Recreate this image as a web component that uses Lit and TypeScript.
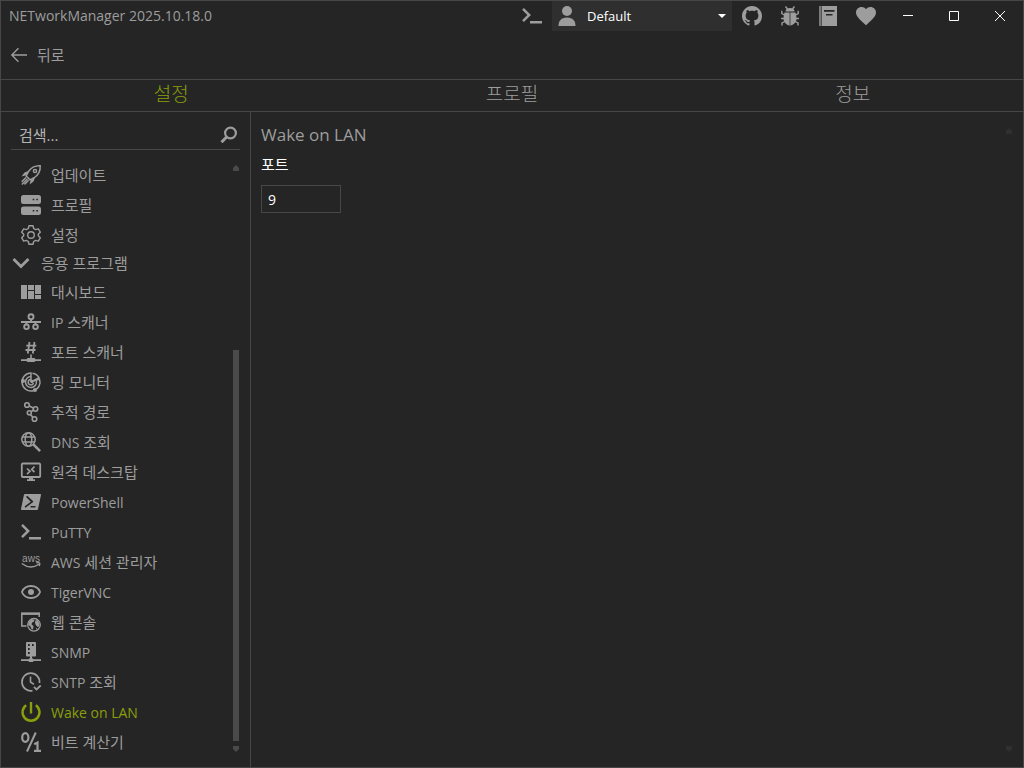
import { LitElement, html, svg, css, nothing } from "lit";
import type { SVGTemplateResult } from "lit";
import { customElement, property, state } from "lit/decorators.js";
import { classMap } from "lit/directives/class-map.js";

const icons: Record<string, SVGTemplateResult> = {
  terminal: svg`<path class="line" stroke-width="2.500" d="M1 2.800 7.200 9 1 15.200M8 16.200H20"/>`,
  person: svg`<circle cx="10" cy="5" r="5"/><path d="M1.500 20c0-5 2.600-8.500 8.500-8.500s8.500 3.500 8.500 8.500z"/>`,
  github: svg`<path transform="scale(1.25)" d="M8 0C3.580 0 0 3.580 0 8c0 3.540 2.290 6.530 5.470 7.590.4.070.55-.17.55-.38 0-.19-.01-.82-.01-1.490-2.010.37-2.530-.49-2.690-.94-.09-.23-.48-.94-.82-1.130-.28-.15-.68-.52-.01-.53.63-.01 1.080.58 1.230.82.72 1.210 1.870.87 2.330.66.070-.52.28-.87.51-1.070-1.780-.2-3.640-.89-3.640-3.950 0-.87.31-1.590.82-2.150-.08-.2-.36-1.020.08-2.120 0 0 .67-.21 2.200.82.64-.18 1.320-.27 2-.27s1.360.09 2 .27c1.530-1.040 2.200-.82 2.200-.82.44 1.100.16 1.920.08 2.120.51.56.82 1.270.82 2.150 0 3.070-1.870 3.750-3.650 3.950.29.25.54.73.54 1.480 0 1.070-.01 1.930-.01 2.200 0 .21.15.46.55.38A8 8 0 0 0 16 8c0-4.420-3.580-8-8-8z"/>`,
  bug: svg`<path d="M5.500 5.500a4.500 3.600 0 0 1 9 0z"/><path d="M4.500 6.500h5v13C6.500 19 3.500 16.500 3.500 12.500c0-2 .4-4 1-6zM15.500 6.500h-5v13c3-.5 6-3 6-7 0-2-.4-4-1-6z"/><path d="M9.300 6.500h1.400v13H9.300z" opacity=".4"/><path class="line" stroke-width="1.400" d="M7.500 3 5.500.5M12.500 3l2-2.500M4.500 9 1.800 7.500V4.800M4 12.500H1M4.800 15.500 2 17v2.500M15.500 9l2.700-1.500V4.800M16 12.500h3M15.200 15.500 18 17v2.500"/>`,
  book: svg`<path d="M1 0h2.200v20H1z" opacity=".7"/><path fill-rule="evenodd" d="M3.700 0H19v20H3.700zM6 4v1.700h10.500V4zM8 8v1.500h6.500V8z"/>`,
  heart: svg`<path d="M10 19.200 8.600 17.900C3.500 13.300 0 10.200 0 6.500 0 3.400 2.400 1 5.500 1 7.300 1 9 1.900 10 3.200 11 1.900 12.700 1 14.500 1 17.600 1 20 3.400 20 6.500c0 3.700-3.500 6.800-8.600 11.400z"/>`,
  search: svg`<circle class="line" cx="12.500" cy="8" r="5.400" stroke-width="2.200"/><path class="line" stroke-width="3" d="m8.800 11.800-5.300 5.500"/>`,
  back: svg`<path class="line" stroke-width="1.700" d="M20 10H1M9.300 1.500 1 10l8.300 8.500"/>`,
  rocket: svg`<path class="line" stroke-width="1.500" d="M19.200.8c-5.500-.3-9 1.700-11.700 5.700L5.200 11l3.800 3.800 4.500-2.300c4-2.700 6-6.200 5.700-11.700z"/><circle class="line" cx="14" cy="6" r="1.600" stroke-width="1.500"/><path d="M7.500 6 3.500 7.500.5 11.500l4.600-1.200zM14 12.500l-1.500 4-4 3 1.200-4.600z"/><path class="line" stroke-width="1.500" d="M5 12.500.7 16.800M6.300 14 .8 19.500M7.600 15.300 3.500 19.400"/>`,
  servers: svg`<path fill-rule="evenodd" d="M2.500 0h15A2.500 2.500 0 0 1 20 2.500v4A2.500 2.500 0 0 1 17.500 9h-15A2.500 2.500 0 0 1 0 6.500v-4A2.500 2.500 0 0 1 2.500 0zM11.700 3.700v1.600h1.600V3.700zm3.600 0v1.600h1.600V3.700zM2.500 11.500h15A2.500 2.500 0 0 1 20 14v3.500a2.500 2.500 0 0 1-2.500 2.500h-15A2.500 2.500 0 0 1 0 17.500V14a2.500 2.500 0 0 1 2.500-2.500zm9.200 3.500v1.600h1.600V15zm3.600 0v1.600h1.600V15z"/>`,
  gear: svg`<path class="line" stroke-width="1.400" stroke-linejoin="round" d="M8 .8h4l.7 2.700 1.900 1.100 2.700-.8 2 3.400-2 2v1.600l2 2-2 3.400-2.700-.8-1.900 1.100-.7 2.700H8l-.7-2.700-1.900-1.100-2.700.8-2-3.400 2-2V9.200l-2-2 2-3.400 2.700.8 1.900-1.100z"/><circle class="line" cx="10" cy="10" r="3.300" stroke-width="1.400"/>`,
  dashboard: svg`<path d="M0 3h6v14H0zM7 3h6v5H7zM7 9h6v8H7zM14 3h6v9h-6zM14 13h6v4h-6z"/>`,
  network: svg`<g class="line" stroke-width="1.900"><circle cx="10" cy="4.700" r="2.500"/><circle cx="5.500" cy="14.800" r="2.300"/><circle cx="14.500" cy="14.800" r="2.300"/><path d="M0 10h20M10 7.300V10M5.500 10v2.400M14.500 10v2.400"/></g>`,
  ports: svg`<path class="line" stroke-width="1.800" d="m8.500 0-1.700 11.500M13.500 0l-1.700 11.500M5.300 3.700h10M4.500 8h10"/><path d="M9.200 12.500h1.600V16h2.700l1 1.200H20V19h-5.500l-1 1h-7l-1-1H0v-1.800h5.500l1-1.200h2.700z"/>`,
  radar: svg`<g class="line" stroke-width="1.500"><path d="M10 10V1a9 9 0 1 0 8.500 6L10 10"/><path d="M11.500 1.200a9 9 0 0 1 6.500 4.500L10 10M10 4.500a5.500 5.500 0 1 0 5.400 4.500M10 7.500a2.700 2.700 0 1 0 2.500 3.500"/></g><circle cx="2" cy="9" r="2"/><circle cx="14" cy="18" r="2"/><circle cx="11" cy="9.500" r="1.700"/>`,
  route: svg`<g class="line" stroke-width="1.600"><circle cx="6" cy="3" r="2.300"/><circle cx="14.500" cy="7" r="2.200"/><circle cx="8.300" cy="10.800" r="2"/><circle cx="13.500" cy="17" r="2.300"/><path d="m8.300 4 4 2M12.500 8l-2.300 1.700M9.300 12.700l2.600 2.500"/></g>`,
  lookup: svg`<g class="line" stroke-width="1.500"><circle cx="7.500" cy="7.500" r="6.700"/><ellipse cx="7.500" cy="7.500" rx="3.300" ry="6.700"/><path d="M1.500 5h12M1.500 10h12"/></g><path class="line" stroke-width="2.600" d="m12.300 12.300 6.800 6.800"/>`,
  remote: svg`<path class="line" stroke-width="1.800" d="M1.800 1.500h16.400A1 1 0 0 1 19.200 2.500V14a1 1 0 0 1-1 1H1.800a1 1 0 0 1-1-1V2.500a1 1 0 0 1 1-1z"/><path d="M8 15h4v2.200h2V19H6v-1.800h2z"/><path class="line" stroke-width="1.700" d="m6 6.500 3 2.800-3 2.900M13.500 4.500l-2.800 2.900 2.800 2.800"/>`,
  powershell: svg`<path fill-rule="evenodd" d="M4 2h15.200c.6 0 .9.400.8 1l-3 14c-.1.600-.6 1-1.200 1H.8c-.6 0-.9-.4-.8-1L2.900 3c.1-.6.500-1 1.100-1zm2.200 1.700-1.200 1.300 4.800 4.800-6.300 4.700 1 1.300 7.700-5.700v-.9zM9.500 14v1.500h5V14z"/>`,
  aws: svg`<text x="10" y="10" text-anchor="middle" font-family="Liberation Sans, sans-serif" font-size="10">aws</text><path class="line" stroke-width="1.400" d="M.8 11.500c5.500 4.200 12 4.300 17 .8M15.500 10.800c3-.6 4.300-.2 2.700 3.200"/>`,
  eye: svg`<path class="line" stroke-width="1.800" d="M.9 10C2.500 6 6 4 10 4s7.500 2 9.100 6c-1.600 4-5.100 6-9.100 6S2.500 14 .9 10z"/><circle cx="10" cy="10" r="3"/>`,
  web: svg`<path class="line" stroke-width="1.500" d="M5.500 14H.8V1.500h17.400V5"/><path d="M0 .5h19v2.400H0z"/><circle class="line" cx="13" cy="12.800" r="6.300" stroke-width="1.300"/><path d="M8 9.500l3-2.300 2.500.8-1 2-1.500.5-.5 2 2 1.500-.5 3.500-1.500-.5-1-2.500-2.500-2zM14.500 8.500l2-.5 2 3.500-.5 3-1.500.5-2-2.500-.5-2zM15 16l1.500.5-1.500 1.300z"/>`,
  snmp: svg`<path fill-rule="evenodd" d="M6 0h8a1 1 0 0 1 1 1v12.500a1 1 0 0 1-1 1h-3V16l1.500 1.300H20V19h-7l-1.500 1h-3L7 19H0v-1.700h7.500L9 16v-1.500H6a1 1 0 0 1-1-1V1a1 1 0 0 1 1-1zm1 2v2h1.700V2zm4 0v2h1.700V2zM7 6v2h1.700V6zm0 4v2h1.700v-2z"/>`,
  clock: svg`<g class="line"><path stroke-width="1.700" d="M11.500 18.600A8.800 8.800 0 1 1 18.500 11"/><path stroke-width="1.600" d="M9.500 4.500V10l3.500 2.300"/><path stroke-width="1.800" d="m13 14.800 2.500 2.700 4.200-4"/></g>`,
  power: svg`<path class="line" stroke-width="2.400" d="M10 0v11.500M5.200 3.200a8.500 8.500 0 1 0 9.600 0"/>`,
  bits: svg`<g class="line"><ellipse cx="4.300" cy="5.500" rx="3.100" ry="4.400" stroke-width="2.200"/><path stroke-width="2" d="M14.800.5 6 19.500"/><path stroke-width="2.200" d="M13.200 12.300 16.500 10.500v8.500M13 18.900H20"/></g>`,
  chevron: svg`<path class="line" stroke-width="2.800" d="m2.500 6 7.500 7.500L17.500 6"/>`,
  minimize: svg`<path class="line" stroke-width="1" d="M5 9.500h10"/>`,
  maximize: svg`<path class="line" stroke-width="1" d="M5.500 5.500h9v9h-9z"/>`,
  close: svg`<path class="line" stroke-width="1" d="m5 5 10 10M15 5 5 15"/>`,
};

@customElement("ui-icon")
export class UiIcon extends LitElement {
  @property() name = "";

  static styles = css`
    :host { display: inline-flex; flex: none; width: 20px; height: 20px; }
    svg { width: 100%; height: 100%; fill: currentColor; overflow: visible; }
    .line { fill: none; stroke: currentColor; }
  `;

  render() {
    return html`<svg viewBox="0 0 20 20" aria-hidden="true">${icons[this.name] ?? nothing}</svg>`;
  }
}

@customElement("scroll-rail")
export class ScrollRail extends LitElement {
  @property({ type: Number }) start = 0;
  @property({ type: Boolean }) thumb = false;

  static styles = css`
    :host { display: flex; flex-direction: column; width: 6px; color: var(--rail); }
    .arrow { width: 6px; height: 6px; flex: none; fill: currentColor; }
    .track { display: flex; flex-direction: column; flex: 1; margin-bottom: 5px; }
    .thumb { flex: 1; background: currentColor; }
  `;

  render() {
    return html`
      <svg class="arrow" viewBox="0 0 6 6"><path d="M3 0 6 3v3H0V3z" /></svg>
      <div class="track">
        ${this.thumb
          ? html`<div style="height:${this.start}%"></div><div class="thumb"></div>`
          : nothing}
      </div>
      <svg class="arrow" viewBox="0 0 6 6"><path d="M0 0h6v3L3 6 0 3z" /></svg>
    `;
  }
}

interface Entry { icon: string; label: string; }

const general: Entry[] = [
  { icon: "rocket", label: "업데이트" },
  { icon: "servers", label: "프로필" },
  { icon: "gear", label: "설정" },
];

const applications: Entry[] = [
  { icon: "dashboard", label: "대시보드" },
  { icon: "network", label: "IP 스캐너" },
  { icon: "ports", label: "포트 스캐너" },
  { icon: "radar", label: "핑 모니터" },
  { icon: "route", label: "추적 경로" },
  { icon: "lookup", label: "DNS 조회" },
  { icon: "remote", label: "원격 데스크탑" },
  { icon: "powershell", label: "PowerShell" },
  { icon: "terminal", label: "PuTTY" },
  { icon: "aws", label: "AWS 세션 관리자" },
  { icon: "eye", label: "TigerVNC" },
  { icon: "web", label: "웹 콘솔" },
  { icon: "snmp", label: "SNMP" },
  { icon: "clock", label: "SNTP 조회" },
  { icon: "power", label: "Wake on LAN" },
  { icon: "bits", label: "비트 계산기" },
];

@customElement("app-root")
export class AppRoot extends LitElement {
  @state() private tab = "설정";
  @state() private current = "Wake on LAN";

  static styles = css`
    :host {
      --bg: #252525;
      --line: #474747;
      --text: #9d9d9d;
      --accent: #8a9f0b;
      --rail: #4a4a4a;
      display: block;
      color: var(--text);
      font: 15px/20px "Open Sans", "Noto Sans CJK KR", sans-serif;
    }
    * { box-sizing: border-box; }
    button, input, select { font: inherit; color: inherit; background: none; border: 0; border-radius: 0; margin: 0; padding: 0; outline: 0; }
    .window { display: flex; flex-direction: column; min-height: 100vh; background: var(--bg); border: 1px solid var(--line); }
    .titlebar { display: flex; align-items: center; height: 30px; }
    .title { flex: 1; margin: 0; padding-left: 8px; font-size: 14px; font-weight: 400; white-space: nowrap; }
    .command { display: flex; align-items: center; justify-content: center; width: 38px; height: 30px; }
    .console { width: 40px; }
    .profile { display: flex; align-items: center; width: 180px; height: 30px; margin-right: 1px; padding: 0 6px 0 5px; background: #2f2f2f; }
    .profile select { appearance: none; flex: 1; min-width: 0; height: 30px; padding-left: 10px; color: #fff; font-size: 13px; }
    .caret { width: 8px; height: 4px; fill: #fff; pointer-events: none; }
    .chrome { display: flex; align-items: center; justify-content: center; width: 46px; height: 30px; color: #fff; }
    .backbar { display: flex; align-items: center; height: 48px; padding-left: 10px; }
    .back { display: flex; align-items: center; gap: 10px; }
    .back ui-icon { width: 16px; height: 16px; }
    .tabs { display: grid; grid-template-columns: repeat(3, 1fr); height: 33px; border: solid var(--line); border-width: 1px 0; }
    .tab { padding-bottom: 3px; font-size: 19px; font-weight: 300; line-height: 28px; }
    .tab.on { color: var(--accent); }
    .body { display: grid; grid-template-columns: 250px minmax(0, 1fr); flex: 1; }
    .sidebar { display: flex; flex-direction: column; padding: 8px 10px 10px; border-right: 1px solid var(--line); }
    .search { display: flex; align-items: center; height: 30px; padding: 0 2px 0 8px; border-bottom: 1px solid var(--line); }
    .search input { flex: 1; min-width: 0; }
    .search input::placeholder { color: #b4b4b4; opacity: 1; }
    .listing { display: flex; flex: 1; padding-top: 10px; }
    .entries { flex: 1; min-width: 0; }
    .entry { display: flex; align-items: center; gap: 10px; width: 100%; height: 30px; padding-left: 10px; white-space: nowrap; }
    .entry.on { color: var(--accent); }
    .latin { font-size: 14px; }
    .group { display: flex; align-items: center; gap: 10px; height: 27px; width: 100%; padding-bottom: 1px; }
    .listing scroll-rail { margin: 5px 1px 5px 0; }
    .content { display: flex; justify-content: space-between; padding: 10px 11px 15px 10px; }
    .content scroll-rail { --rail: #303030; margin-top: 6px; }
    .heading { margin: 0 0 6px; font-size: 17px; font-weight: 400; line-height: 26px; }
    .field { display: flex; flex-direction: column; align-items: flex-start; gap: 11px; color: #fff; }
    .port { width: 80px; height: 28px; padding: 0 6px; border: 1px solid var(--line); font-size: 14px; }
  `;

  private label(text: string) {
    return text.split(/([A-Za-z]+(?: [A-Za-z]+)*)/).map((part) =>
      /[A-Za-z]/.test(part) ? html`<span class="latin">${part}</span>` : part,
    );
  }

  private entry({ icon, label }: Entry) {
    return html`<button
      class=${classMap({ entry: true, on: label === this.current })}
      @click=${() => (this.current = label)}
    ><ui-icon name=${icon}></ui-icon><span>${this.label(label)}</span></button>`;
  }

  render() {
    return html`
      <div class="window">
        <header class="titlebar">
          <h1 class="title">NETworkManager 2025.10.18.0</h1>
          <button class="command console" aria-label="Terminal"><ui-icon name="terminal"></ui-icon></button>
          <label class="profile">
            <ui-icon name="person"></ui-icon>
            <select aria-label="Profile"><option>Default</option></select>
            <svg class="caret" viewBox="0 0 8 4"><path d="M0 0h8L4 4z" /></svg>
          </label>
          ${["github", "bug", "book", "heart"].map(
            (name) => html`<button class="command" aria-label=${name}><ui-icon name=${name}></ui-icon></button>`,
          )}
          ${["minimize", "maximize", "close"].map(
            (name) => html`<button class="chrome" aria-label=${name}><ui-icon name=${name}></ui-icon></button>`,
          )}
        </header>
        <div class="backbar">
          <button class="back"><ui-icon name="back"></ui-icon>뒤로</button>
        </div>
        <nav class="tabs">
          ${["설정", "프로필", "정보"].map(
            (name) => html`<button
              class=${classMap({ tab: true, on: name === this.tab })}
              @click=${() => (this.tab = name)}
            >${name}</button>`,
          )}
        </nav>
        <div class="body">
          <aside class="sidebar">
            <label class="search">
              <input type="text" placeholder="검색..." aria-label="검색" />
              <ui-icon name="search"></ui-icon>
            </label>
            <div class="listing">
              <div class="entries">
                ${general.map((e) => this.entry(e))}
                <button class="group" aria-expanded="true"><ui-icon name="chevron"></ui-icon>응용 프로그램</button>
                ${applications.map((e) => this.entry(e))}
              </div>
              <scroll-rail thumb start="31.4"></scroll-rail>
            </div>
          </aside>
          <main class="content">
            <section>
              <h2 class="heading">${this.current}</h2>
              <div class="field">
                <label for="port">포트</label>
                <input id="port" class="port" type="text" inputmode="numeric" .value=${"9"} />
              </div>
            </section>
            <scroll-rail></scroll-rail>
          </main>
        </div>
      </div>
    `;
  }
}
